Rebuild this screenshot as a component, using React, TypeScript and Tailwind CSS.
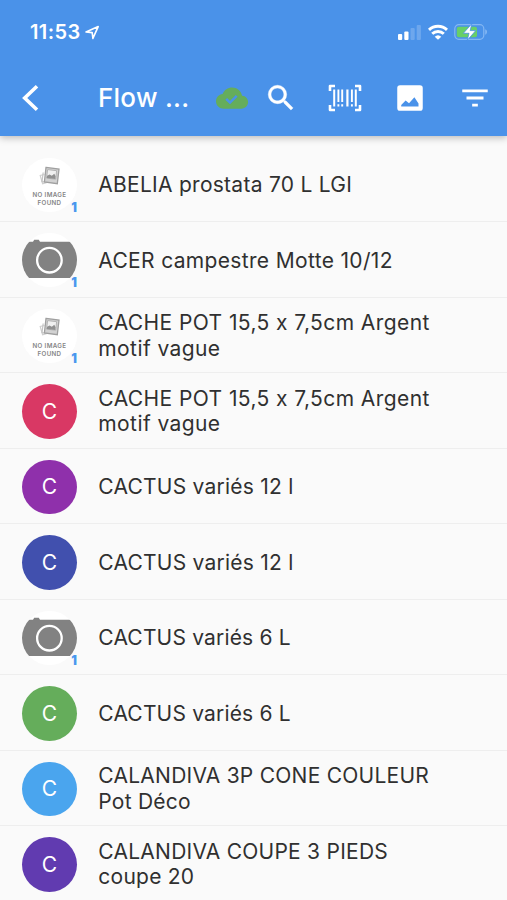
import React from "react";

type Item = { lines: string[]; kind: "none" | "camera" | "letter"; color?: string; tracking: string };

const items: Item[] = [
  { lines: ["ABELIA prostata 70 L LGI"], kind: "none", tracking: "tracking-[0.27px]" },
  { lines: ["ACER campestre Motte 10/12"], kind: "camera", tracking: "tracking-[0.34px]" },
  { lines: ["CACHE POT 15,5 x 7,5cm Argent", "motif vague"], kind: "none", tracking: "tracking-[0.41px]" },
  { lines: ["CACHE POT 15,5 x 7,5cm Argent", "motif vague"], kind: "letter", color: "bg-[#d93864]", tracking: "tracking-[0.41px]" },
  { lines: ["CACTUS variés 12 l"], kind: "letter", color: "bg-[#8f30ab]", tracking: "tracking-[0.24px]" },
  { lines: ["CACTUS variés 12 l"], kind: "letter", color: "bg-[#4150ae]", tracking: "tracking-[0.24px]" },
  { lines: ["CACTUS variés 6 L"], kind: "camera", tracking: "tracking-[0.18px]" },
  { lines: ["CACTUS variés 6 L"], kind: "letter", color: "bg-[#65ad5b]", tracking: "tracking-[0.18px]" },
  { lines: ["CALANDIVA 3P CONE COULEUR", "Pot Déco"], kind: "letter", color: "bg-[#4aa5ee]", tracking: "tracking-[0.25px]" },
  { lines: ["CALANDIVA COUPE 3 PIEDS", "coupe 20"], kind: "letter", color: "bg-[#613bb0]", tracking: "tracking-[0.25px]" },
];

function PhotoStack() {
  return (
    <svg className="mt-[8px] ml-[1px] block h-[20px] w-[22px]" viewBox="0 0 22 20" fill="none">
      <path d="M5.5 8.5 1.2 9.5l2.4 8.2 4-1" stroke="#cfcfcf" strokeWidth="1.2" />
      <path d="M4.2 6.5 3 15.5l4 .7" stroke="#c4c4c4" strokeWidth="1.2" />
      <path d="M7 1.4 20 3 18.3 17.7 5.4 15.9Z" fill="#d2d2d2" stroke="#a0a0a0" strokeWidth="1.3" />
      <path d="m8.6 3.6 9 1.1-.9 8.5-9.1-1.1Z" fill="#f0f0f0" stroke="#a8a8a8" strokeWidth=".8" />
      <path d="m7.8 11.9.3-2.2 2.5-1.3 2.2 1.3 2.5-2 1.3 2.6-.3 2.7Z" fill="#909090" />
    </svg>
  );
}

function Avatar({ item }: { item: Item }) {
  if (item.kind === "letter") {
    return (
      <div className={`flex h-[54.5px] w-[55px] items-center justify-center rounded-full text-[21px] text-white ${item.color}`}>
        <span>C</span>
      </div>
    );
  }
  return (
    <div className="relative h-[54px] w-[55px]">
      {item.kind === "none" ? (
        <div className="flex h-[54px] w-[55px] flex-col items-center overflow-hidden rounded-full bg-white">
          <PhotoStack />
          <div className="mt-[5px] text-center text-[6.2px] font-semibold leading-[8px] tracking-[0.35px] text-[#858585]">
            <div>NO IMAGE</div>
            <div>FOUND</div>
          </div>
        </div>
      ) : (
        <div className="h-[54px] w-[55px] overflow-hidden rounded-full bg-white">
          <svg className="block" width="55" height="54" viewBox="0 0 55 54">
            <path d="M0 8.7h11l1.2-2h4.6l1.2 2H55V45H0Z" fill="#828282" />
            <circle cx="27.4" cy="27.2" r="12.3" fill="none" stroke="#fff" strokeWidth="2.3" />
          </svg>
        </div>
      )}
      <span className="absolute right-0 -bottom-[2px] text-[12.5px] font-black leading-[13px] text-[#4997ee]">1</span>
    </div>
  );
}

function StatusBar() {
  return (
    <div className="flex h-[64px] items-center pl-[30px] pr-[18px]">
      <span className="w-[55px] text-[20px] font-semibold leading-none tracking-[0.4px]">11:53</span>
      <svg width="15" height="15" viewBox="0 0 15 15" fill="none">
        <path d="M1 7 13.2 1.6 7.9 13.4 7.2 7.6Z" stroke="white" strokeWidth="1.6" strokeLinejoin="round" />
      </svg>
      <svg className="ml-auto" width="25" height="16" viewBox="0 0 25 16" fill="white">
        <rect x="0" y="10" width="4.2" height="6" rx="1" />
        <rect x="6.3" y="7.5" width="4.2" height="8.5" rx="1" />
        <rect x="12.5" y="4" width="4.2" height="12" rx="1" opacity=".2" />
        <rect x="18.7" y="1" width="4.2" height="15" rx="1" opacity=".2" />
      </svg>
      <svg className="ml-[5px]" width="20" height="16" viewBox="0 0 20 16" fill="none" stroke="white" strokeWidth="2.9">
        <path d="M1 5.9a13 13 0 0 1 18 0" />
        <path d="M4.2 9.8a8.4 8.4 0 0 1 11.6 0" />
        <path d="M10 15.7 6.7 12.7a4.8 4.8 0 0 1 6.6 0Z" fill="white" stroke="none" />
      </svg>
      <svg className="ml-[6px] mr-px" width="34" height="18" viewBox="0 0 34 18">
        <rect x=".8" y="1.7" width="29" height="14.6" rx="4" fill="none" stroke="#84b7f3" strokeWidth="1.2" />
        <rect x="2.8" y="3.8" width="20.2" height="10.4" rx="2" fill="#68cf68" />
        <path d="M31.2 6.3c2.4.8 2.4 4.6 0 5.4Z" fill="#84b7f3" />
        <path d="m17.8.8-8.5 9.5h5.7l-1.7 6.9 8.5-9.6h-5.6Z" fill="white" stroke="#4a92e9" strokeWidth=".8" />
      </svg>
    </div>
  );
}

function AppBar() {
  return (
    <div className="flex h-[68px] items-center">
      <svg className="ml-[20px] block" width="20" height="28" viewBox="0 0 20 28" fill="none">
        <path d="M17 2.3 4.7 14 17 25.7" stroke="white" strokeWidth="3.6" />
      </svg>
      <h1 className="ml-[58px] w-[117px] whitespace-pre text-[26px] font-medium leading-none tracking-[0.25px]">Flow ...</h1>
      <svg className="block" width="34" height="24" viewBox="0 0 34 24">
        <path d="M8.8 22.7C4.4 22.7 1 19.3 1 15.2c0-3.8 2.8-6.9 6.6-7.3C9.3 4 13 1.6 17 1.6c5 0 9 3.4 10.1 8.1 3.5.2 6 3 6 6.4 0 3.7-3 6.6-6.7 6.6Z" fill="#65ad5b" />
        <path d="m11.2 12.8 3.8 3.8 6.7-6.8" fill="none" stroke="#4a92e9" strokeWidth="2.5" />
      </svg>
      <svg className="ml-[14.5px] block" width="34" height="34" viewBox="0 0 24 24" fill="white">
        <path stroke="white" strokeWidth=".3" d="M15.5 14h-.79l-.28-.27A6.47 6.47 0 0 0 16 9.5 6.5 6.5 0 1 0 9.5 16c1.61 0 3.09-.59 4.23-1.57l.27.28v.79l5 4.99L20.49 19zm-6 0C7.01 14 5 11.99 5 9.5S7.01 5 9.5 5 14 7.01 14 9.5 11.99 14 9.5 14" />
      </svg>
      <svg className="ml-[30px] block" width="34" height="28" viewBox="0 0 34 28" fill="none" stroke="white">
        <path d="M7 2H2v5M27 2h5v5M2 21v5h5M32 21v5h-5" strokeWidth="2.6" strokeLinejoin="round" />
        <path d="M6.2 5.5v17M27.8 5.5v17" strokeWidth="2" />
        <path d="M10.4 5.5v12.5M14.2 5.5v12.5M23.9 5.5v12.5M10.4 20.3v2.2M14.2 20.3v2.2M23.9 20.3v2.2" strokeWidth="1.9" />
        <path d="M19.4 5.5v17" strokeWidth="2.2" />
      </svg>
      <svg className="ml-[31px] block" width="34" height="34" viewBox="0 0 24 24" fill="white">
        <path d="M21 19V5a2 2 0 0 0-2-2H5a2 2 0 0 0-2 2v14a2 2 0 0 0 2 2h14a2 2 0 0 0 2-2M5.8 18v-1l3.1-3.3 2.4 2 3.8-4.3 2.9 4.4V18Z" />
      </svg>
      <svg className="ml-[31px] block" width="34" height="34" viewBox="0 0 24 24" fill="white">
        <path d="M10 18h4v-2h-4zM3 6v2h18V6zm3 7h12v-2H6z" />
      </svg>
    </div>
  );
}

export default function App() {
  return (
    <div className="h-[900px] w-[507px] overflow-hidden bg-[#fafafa] font-['Inter',sans-serif] text-[#303030]">
      <header className="relative h-[135.5px] bg-[#4a92e9] text-white shadow-[0_2px_7px_rgba(0,0,0,0.25)]">
        <StatusBar />
        <AppBar />
      </header>
      <ul className="pt-[11px]">
        {items.map((item, i) => (
          <li key={i} className="flex h-[75.5px] items-center border-b border-[#eeeeee] pl-[22px] pt-[2px]">
            <Avatar item={item} />
            <div className={`ml-[21.3px] mt-[0.3px] whitespace-nowrap text-[21px] leading-[25.7px] ${item.tracking}`}>
              {item.lines.map((line, j) => (
                <div key={j}>{line}</div>
              ))}
            </div>
          </li>
        ))}
      </ul>
    </div>
  );
}
